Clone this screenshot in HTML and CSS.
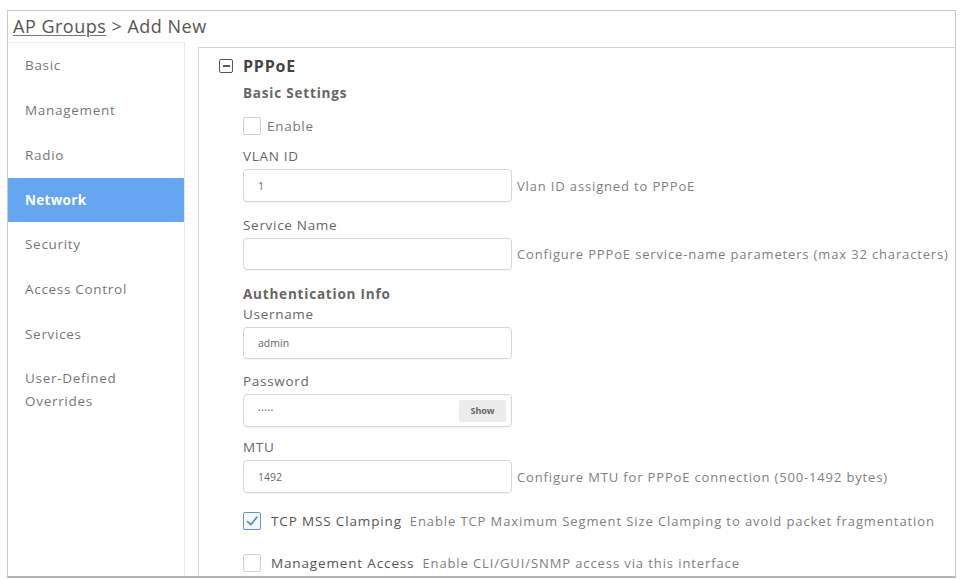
FILE: index.html
```html
<!DOCTYPE html>
<html>
<head>
<meta charset="utf-8">
<link rel="stylesheet" href="styles.css">
</head>
<body>
<div class="frame">
  <div class="header"><span class="crumb">AP Groups</span> &gt; Add New</div>
  <div class="body">
    <nav class="sidebar">
      <div class="nav-item">Basic</div>
      <div class="nav-item">Management</div>
      <div class="nav-item">Radio</div>
      <div class="nav-item active">Network</div>
      <div class="nav-item">Security</div>
      <div class="nav-item">Access Control</div>
      <div class="nav-item">Services</div>
      <div class="nav-item multi">User-Defined<br>Overrides</div>
    </nav>
    <main class="main">
      <div class="title">
        <span class="collapse"><span class="bar"></span></span>
        <span>PPPoE</span>
      </div>
      <div class="form">
        <div class="section s-basic">Basic Settings</div>
        <div class="check-row r-enable"><span class="cb"></span><span class="cb-label">Enable</span></div>

        <div class="label l-vlan">VLAN ID</div>
        <div class="field-row">
          <div class="input h33"><span class="val">1</span></div>
          <span class="help">Vlan ID assigned to PPPoE</span>
        </div>

        <div class="label l-svc">Service Name</div>
        <div class="field-row">
          <div class="input h32"></div>
          <span class="help">Configure PPPoE service-name parameters (max 32 characters)</span>
        </div>

        <div class="section s-auth">Authentication Info</div>
        <div class="label l-user">Username</div>
        <div class="field-row">
          <div class="input h32"><span class="val">admin</span></div>
        </div>

        <div class="label l-pass">Password</div>
        <div class="field-row">
          <div class="input h33 pw"><span class="val dots">•••••</span><span class="show">Show</span></div>
        </div>

        <div class="label l-mtu">MTU</div>
        <div class="field-row">
          <div class="input h33"><span class="val">1492</span></div>
          <span class="help">Configure MTU for PPPoE connection (500-1492 bytes)</span>
        </div>

        <div class="check-row r-tcp">
          <span class="cb checked"><svg viewBox="0 0 18 18" width="18" height="18"><path d="M4.5 9.5 L7.8 12.8 L13.8 5.2" fill="none" stroke="#4a86c8" stroke-width="1.6" stroke-linecap="round" stroke-linejoin="round"/></svg></span>
          <span class="opt-name">TCP MSS Clamping</span>
          <span class="opt-desc">Enable TCP Maximum Segment Size Clamping to avoid packet fragmentation</span>
        </div>
        <div class="check-row r-mgmt">
          <span class="cb"></span>
          <span class="opt-name">Management Access</span>
          <span class="opt-desc">Enable CLI/GUI/SNMP access via this interface</span>
        </div>
      </div>
    </main>
  </div>
</div>
</body>
</html>
```

FILE: styles.css
```css
html, body {
  margin: 0;
  padding: 0;
  background: #ffffff;
  overflow: hidden;
}
body {
  font-family: "Open Sans", "Liberation Sans", sans-serif;
  color: #666;
}
.frame {
  margin: 10px 4px 0 7px;
  height: 568px;
  border: 1px solid #c8c8c8;
  border-bottom: 2px solid #b5b5b5;
  box-sizing: border-box;
  display: flex;
  flex-direction: column;
  overflow: hidden;
}
.header {
  height: 31px;
  flex: none;
  padding-left: 5px;
  font-size: 18px;
  line-height: 31px;
  color: #555;
  letter-spacing: 0.5px;
}
.crumb {
  text-decoration: underline;
  text-decoration-color: #777;
  text-decoration-thickness: 1px;
  text-underline-offset: 2px;
}
.body {
  flex: 1;
  display: flex;
  min-height: 0;
}
.sidebar {
  width: 176px;
  flex: none;
  border-top: 1px solid #ececec;
  border-right: 1px solid #e6e6e6;
}
.nav-item {
  height: 45px;
  line-height: 45px;
  padding-left: 17px;
  font-size: 13.5px;
  letter-spacing: 0.7px;
  color: #777;
}
.nav-item.active {
  height: 44px;
  line-height: 44px;
  background: #65a6f3;
  color: #fff;
  font-weight: 700;
  letter-spacing: 0.3px;
}
.nav-item.multi {
  height: auto;
  line-height: 23px;
  padding-top: 10px;
}
.main {
  flex: 1;
  margin: 5px 0 0 13px;
  border-top: 1px solid #d4d4d4;
  border-left: 1px solid #d4d4d4;
  padding-left: 20px;
}
.title {
  margin-top: 8px;
  height: 20px;
  display: flex;
  align-items: center;
  gap: 10px;
  font-size: 16px;
  letter-spacing: 0.8px;
  font-weight: 700;
  color: #444;
}
.collapse {
  width: 14px;
  height: 14px;
  box-sizing: border-box;
  border: 1.6px solid #555;
  border-radius: 2px;
  display: flex;
  align-items: center;
  justify-content: center;
}
.collapse .bar {
  width: 7px;
  height: 1.6px;
  background: #555;
}
.form {
  padding-left: 24px;
}
.section {
  height: 20px;
  line-height: 20px;
  font-size: 13.5px;
  letter-spacing: 0.8px;
  font-weight: 700;
  color: #666;
}
.s-basic { margin-top: 7px; }
.s-auth { margin-top: 14px; }
.label {
  height: 20px;
  line-height: 20px;
  font-size: 13.5px;
  letter-spacing: 0.7px;
  color: #666;
}
.l-vlan { margin-top: 11px; }
.l-svc { margin-top: 13px; }
.l-user { margin-top: 0; }
.l-pass { margin-top: 12px; }
.l-mtu { margin-top: 10px; }
.field-row {
  display: flex;
  align-items: center;
  margin-top: 3px;
}
.input {
  width: 269px;
  box-sizing: border-box;
  border: 1px solid #d6d6d6;
  border-radius: 4px;
  box-shadow: 0 1px 1px rgba(0,0,0,0.04);
  display: flex;
  align-items: center;
  padding-left: 14px;
  padding-right: 5px;
  flex: none;
}
.h32 { height: 32px; }
.h33 { height: 33px; }
.val {
  font-size: 10.5px;
  color: #666;
}
.dots {
  font-size: 7px;
  letter-spacing: 0.5px;
  color: #888;
}
.pw { justify-content: space-between; }
.show {
  background: #ececec;
  border-radius: 2px;
  width: 47px;
  height: 22px;
  line-height: 22px;
  text-align: center;
  font-size: 9px;
  font-weight: 700;
  color: #666;
}
.help {
  margin-left: 5px;
  font-size: 13px;
  letter-spacing: 0.85px;
  color: #808080;
  white-space: nowrap;
}
.check-row {
  display: flex;
  align-items: center;
  height: 18px;
  white-space: nowrap;
}
.r-enable { margin-top: 14px; }
.r-tcp { margin-top: 19px; }
.r-mgmt { margin-top: 24px; }
.cb {
  width: 18px;
  height: 18px;
  box-sizing: border-box;
  border: 1px solid #d0d0d0;
  border-radius: 2px;
  flex: none;
  display: flex;
}
.cb svg { margin: -1px; }
.cb.checked {
  border: 1px solid #5f95cf;
  background: #f4f8fc;
}
.cb-label {
  margin-left: 6px;
  font-size: 13.5px;
  letter-spacing: 0.7px;
  color: #777;
}
.opt-name {
  margin-left: 10px;
  font-size: 13.5px;
  letter-spacing: 0.85px;
  color: #555;
}
.opt-desc {
  margin-left: 8px;
  font-size: 13px;
  letter-spacing: 0.9px;
  color: #808080;
}
```
